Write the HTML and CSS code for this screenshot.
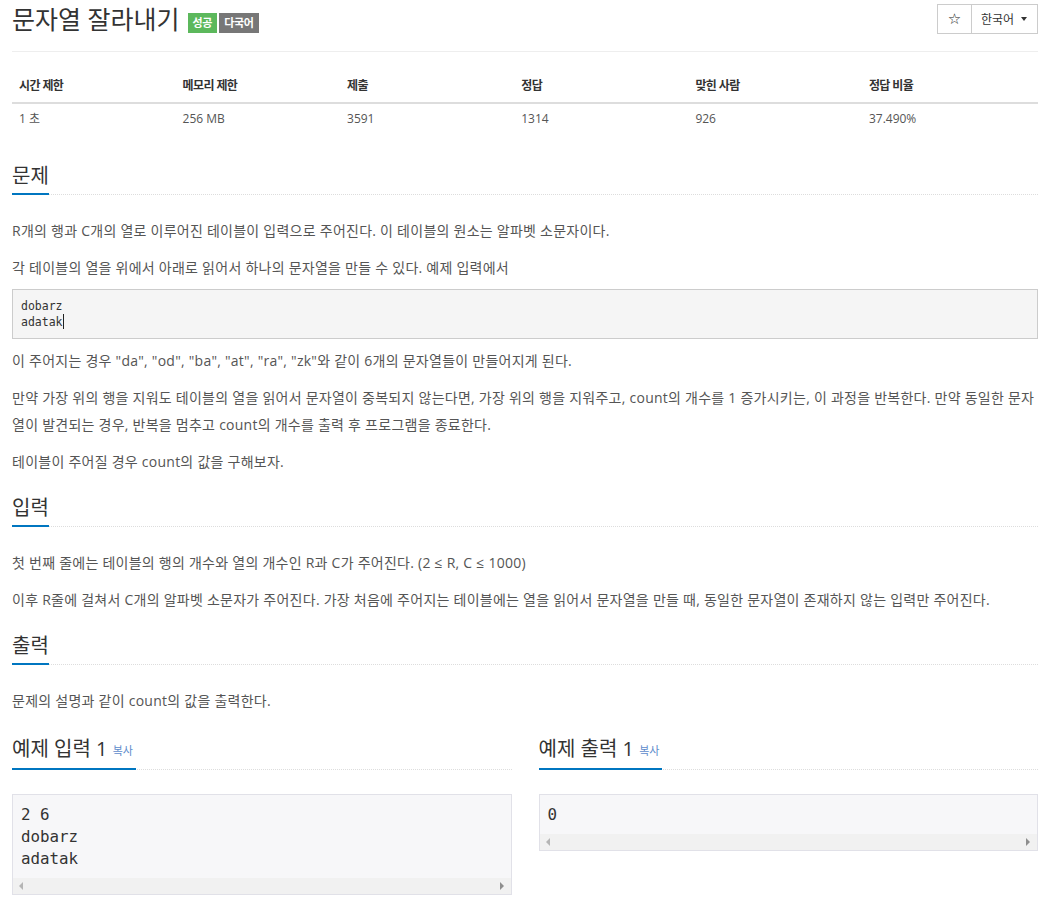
FILE: index.html
```html
<!DOCTYPE html>
<html lang="ko">
<head>
<meta charset="utf-8">
<title>문자열 잘라내기</title>
<link rel="stylesheet" href="styles.css">
</head>
<body>
<div class="page">
  <div class="page-header">
    <h1 class="title"><span class="title-text">문자열 잘라내기</span><span class="label label-success">성공</span><span class="label label-gray">다국어</span></h1>
    <div class="btn-group">
      <button class="btn btn-star">☆</button>
      <button class="btn btn-lang">한국어 <span class="caret"></span></button>
    </div>
  </div>

  <table class="stats">
    <thead>
      <tr><th class="c1">시간 제한</th><th class="c1">메모리 제한</th><th>제출</th><th>정답</th><th>맞힌 사람</th><th>정답 비율</th></tr>
    </thead>
    <tbody>
      <tr><td>1 초</td><td>256 MB</td><td>3591</td><td>1314</td><td>926</td><td>37.490%</td></tr>
    </tbody>
  </table>

  <section class="sec">
    <h2 class="headline"><span>문제</span></h2>
    <p>R개의 행과 C개의 열로 이루어진 테이블이 입력으로 주어진다. 이 테이블의 원소는 알파벳 소문자이다.</p>
    <p>각 테이블의 열을 위에서 아래로 읽어서 하나의 문자열을 만들 수 있다. 예제 입력에서</p>
    <pre class="code">dobarz
adatak<span class="cursor"></span></pre>
    <p>이 주어지는 경우 "da", "od", "ba", "at", "ra", "zk"와 같이 6개의 문자열들이 만들어지게 된다.</p>
    <p>만약 가장 위의 행을 지워도 테이블의 열을 읽어서 문자열이 중복되지 않는다면, 가장 위의 행을 지워주고, count의 개수를 1 증가시키는, 이 과정을 반복한다. 만약 동일한 문자열이 발견되는 경우, 반복을 멈추고 count의 개수를 출력 후 프로그램을 종료한다.</p>
    <p>테이블이 주어질 경우 count의 값을 구해보자.</p>
  </section>

  <section class="sec">
    <h2 class="headline"><span>입력</span></h2>
    <p>첫 번째 줄에는 테이블의 행의 개수와 열의 개수인 R과 C가 주어진다. (2 ≤ R, C ≤ 1000)</p>
    <p>이후 R줄에 걸쳐서 C개의 알파벳 소문자가 주어진다. 가장 처음에 주어지는 테이블에는 열을 읽어서 문자열을 만들 때, 동일한 문자열이 존재하지 않는 입력만 주어진다.</p>
  </section>

  <section class="sec">
    <h2 class="headline"><span>출력</span></h2>
    <p>문제의 설명과 같이 count의 값을 출력한다.</p>
  </section>

  <div class="samples">
    <div class="sample-col">
      <h2 class="headline sample-head"><span>예제 입력 1 <a class="copy">복사</a></span></h2>
      <div class="sample">
        <pre>2 6
dobarz
adatak</pre>
        <div class="hscroll"><i class="arr arr-l"></i><i class="arr arr-r"></i></div>
      </div>
    </div>
    <div class="sample-col">
      <h2 class="headline sample-head"><span>예제 출력 1 <a class="copy">복사</a></span></h2>
      <div class="sample">
        <pre>0</pre>
        <div class="hscroll"><i class="arr arr-l"></i><i class="arr arr-r"></i></div>
      </div>
    </div>
  </div>
</div>
</body>
</html>
```

FILE: styles.css
```css
html, body {
  margin: 0;
  padding: 0;
  background: #fff;
}
body {
  font-family: "Open Sans", "Noto Sans CJK KR", sans-serif;
  font-size: 14px;
  color: #555;
}
.page {
  padding: 0 12px;
}

/* header */
.page-header {
  display: flex;
  justify-content: space-between;
  align-items: flex-start;
  height: 51px;
  border-bottom: 1px solid #eee;
}
.title {
  margin: 0;
  padding-top: 1px;
  font-size: 25px;
  line-height: 36px;
  font-weight: 400;
  color: #333;
  display: flex;
  align-items: flex-start;
}
.label {
  display: inline-block;
  margin-top: 12px;
  height: 20px;
  line-height: 20px;
  padding: 0 5px;
  font-size: 11px;
  font-weight: 700;
  color: #fff;
  letter-spacing: -0.3px;
}
.label-success {
  background: #5cb85c;
  margin-left: 8px;
}
.label-gray {
  background: #777;
  margin-left: 2px;
}
.btn-group {
  display: flex;
  margin-top: 4px;
}
.btn {
  height: 30px;
  background: #fff;
  border: 1px solid #ccc;
  font-family: "Open Sans", "Noto Sans CJK KR", sans-serif;
  color: #333;
  padding: 0;
  cursor: pointer;
}
.btn-star {
  width: 35px;
  font-size: 15px;
  font-weight: 700;
  color: #222;
  font-family: "DejaVu Sans", sans-serif;
}
.btn-lang {
  width: 67px;
  margin-left: -1px;
  font-size: 12px;
  display: flex;
  align-items: center;
  padding-left: 9px;
  gap: 7px;
}
.caret {
  display: inline-block;
  width: 0;
  height: 0;
  border-top: 4px solid #333;
  border-left: 3px solid transparent;
  border-right: 3px solid transparent;
}

/* stats table */
.stats {
  width: 100%;
  border-collapse: collapse;
  margin: 18px 0 28px;
  font-size: 12px;
}
.stats th {
  text-align: left;
  font-weight: 700;
  color: #333;
  padding: 8px 7px;
  line-height: 16px;
  border-bottom: 2px solid #ddd;
  width: 174px;
  letter-spacing: -0.6px;
}
.stats th.c1 {
  width: 164px;
}
.stats td {
  padding: 7px 7px 8px;
  line-height: 16px;
  color: #555;
}

/* sections */
.sec {
  display: flow-root;
  margin-top: 10px;
}
.headline {
  margin: 0 0 22px;
  font-size: 20px;
  line-height: 26px;
  font-weight: 400;
  color: #333;
  border-bottom: 1px dotted #ddd;
}
.headline > span {
  display: inline-block;
  padding-bottom: 4px;
  border-bottom: 2px solid #0076c0;
  margin-bottom: -1px;
}
.sec p {
  margin: 0 0 10px;
  line-height: 27px;
  letter-spacing: 0.25px;
}
.code {
  margin: -2px 0 8px;
  padding: 8px 8px;
  background: #f5f5f5;
  border: 1px solid #ccc;
  font-family: "DejaVu Sans Mono", monospace;
  font-size: 11.5px;
  line-height: 16px;
  color: #333;
}
.cursor {
  display: inline-block;
  width: 1px;
  height: 15px;
  background: #222;
  vertical-align: -3px;
}

/* samples */
.samples {
  display: grid;
  grid-template-columns: 1fr 1fr;
  column-gap: 27px;
  margin-top: 10px;
}
.sample-head {
  margin-bottom: 24px;
  padding-top: 2px;
}
.sample-head > span {
  padding-right: 3px;
}
.copy {
  font-size: 11px;
  color: #5e8ccb;
  vertical-align: 1px;
}
.sample {
  border: 1px solid #e1e1e8;
  background: #f7f7f9;
}
.sample pre {
  margin: 0;
  padding: 9px 8px 8px;
  font-family: "DejaVu Sans Mono", monospace;
  font-size: 15.8px;
  line-height: 22px;
  color: #333;
}
.hscroll {
  height: 16px;
  background: #f1f1f1;
  display: flex;
  justify-content: space-between;
  align-items: center;
  padding: 0 7px 0 6px;
}
.arr {
  display: block;
  width: 0;
  height: 0;
  border-top: 4px solid transparent;
  border-bottom: 4px solid transparent;
}
.arr-l {
  border-right: 4px solid #b5b5b5;
}
.arr-r {
  border-left: 4px solid #8e8e8e;
}
```
